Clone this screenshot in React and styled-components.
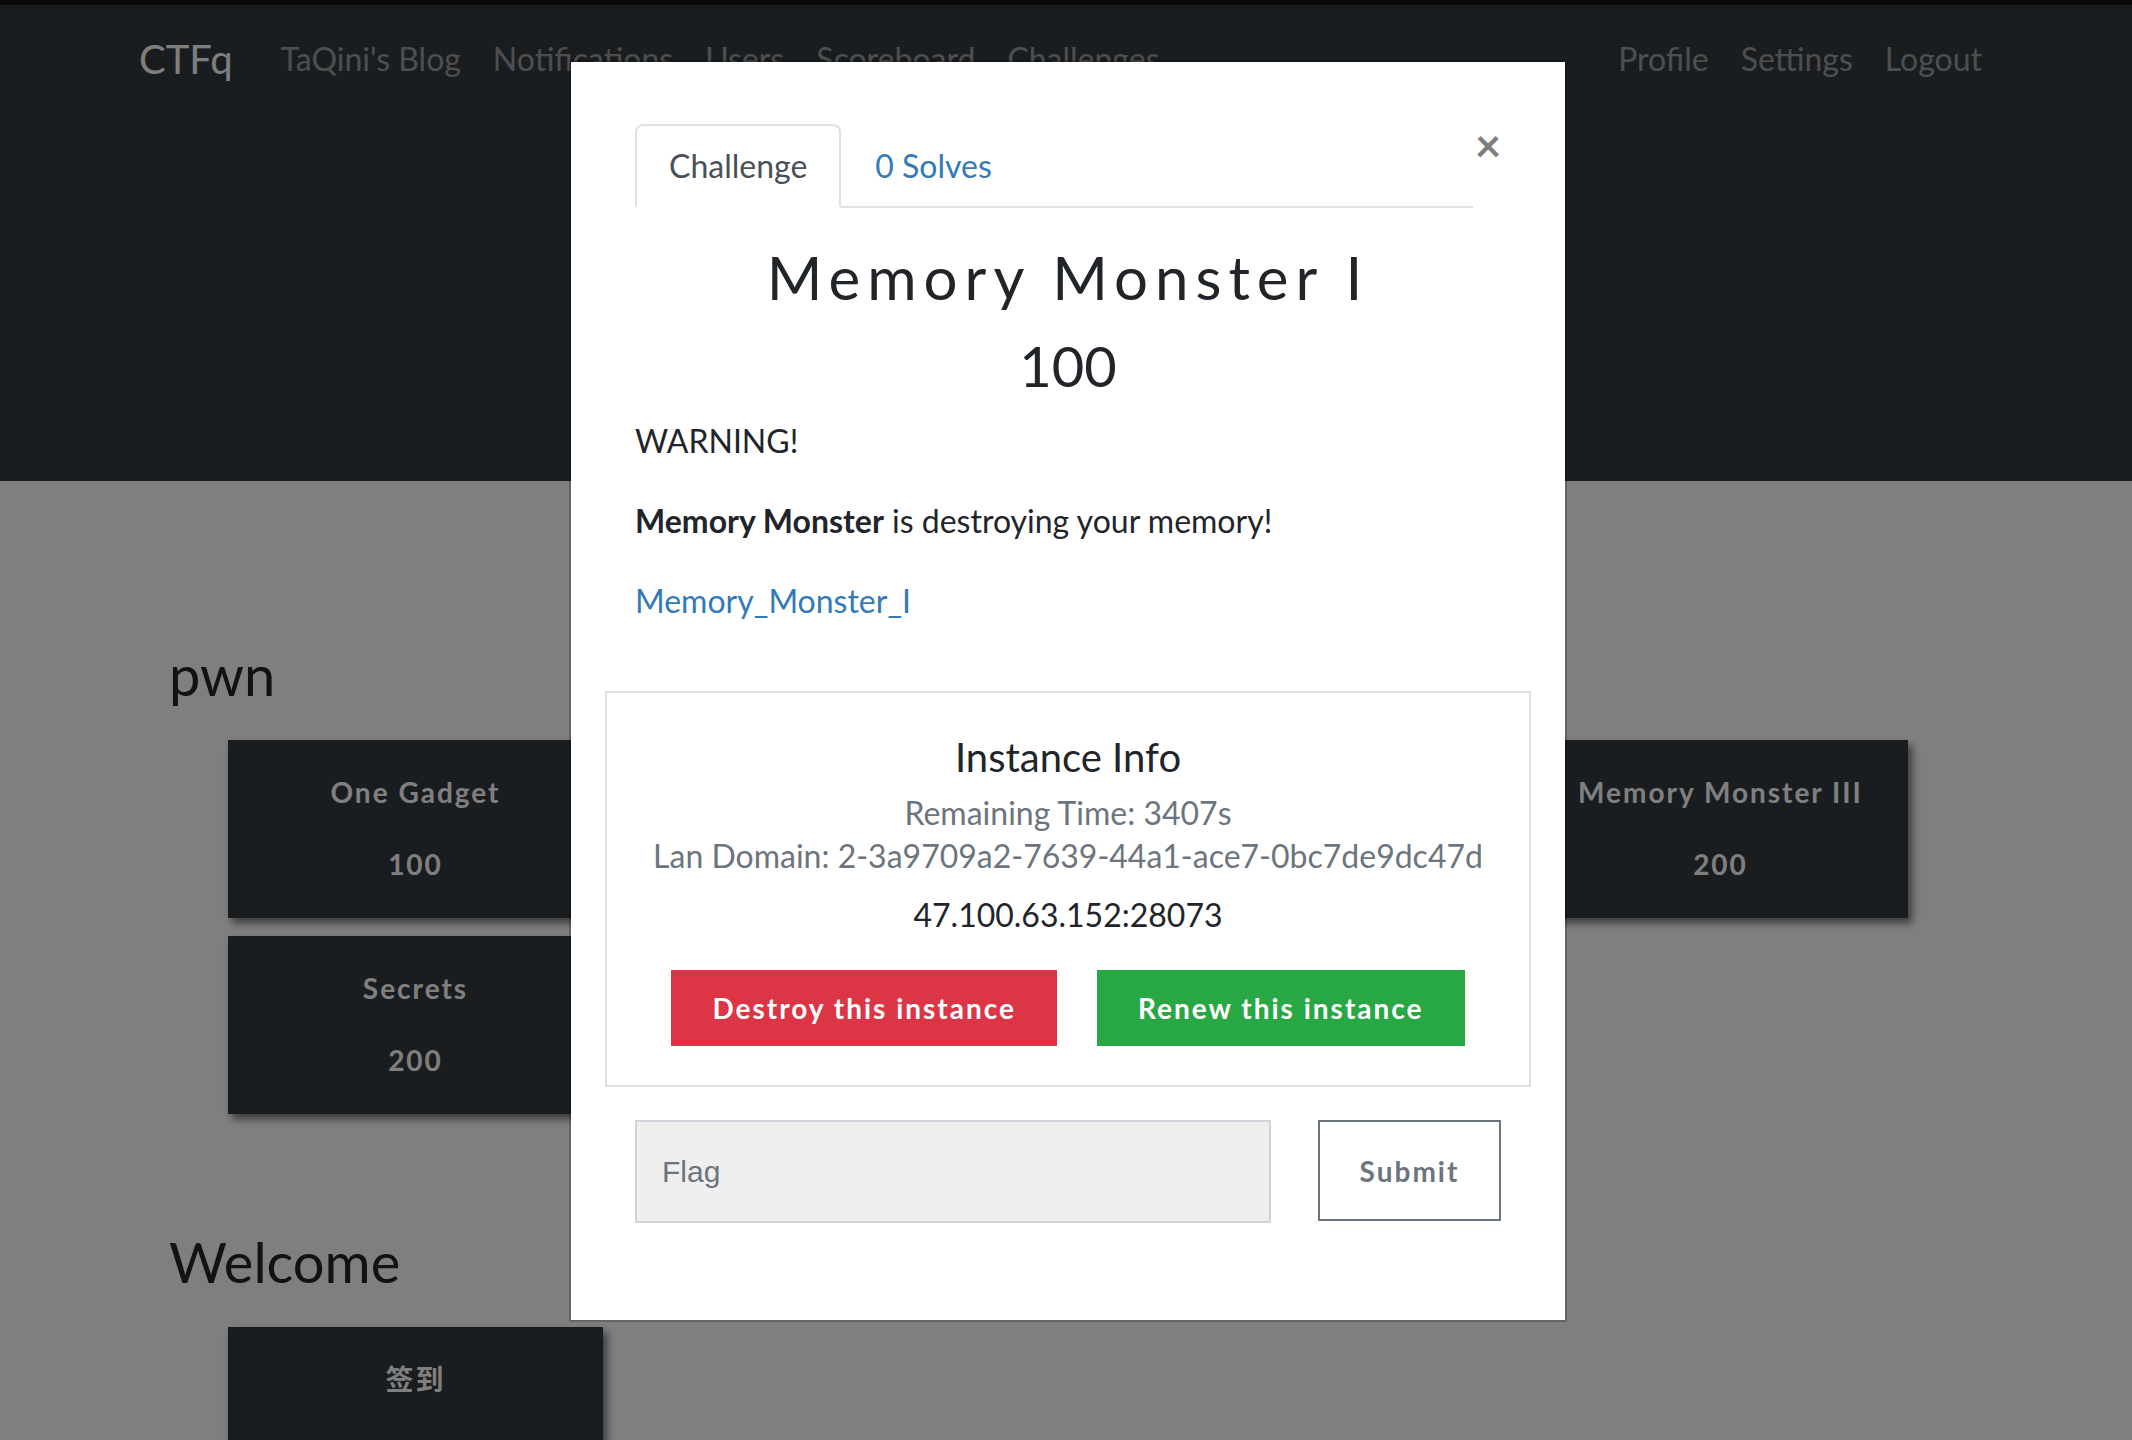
import React from "react";
import styled, { createGlobalStyle } from "styled-components";

const GlobalStyle = createGlobalStyle`
  html, body {
    margin: 0;
    padding: 0;
    overflow: hidden;
    background: #fff;
  }
  body {
    font-family: Lato, "Noto Sans", "Noto Sans CJK SC", sans-serif;
    color: #212529;
  }
  * { box-sizing: border-box; }
`;

const Header = styled.header`
  background: #343a40;
  border-top: 5px solid #141414;
  height: 481px;
`;

const Navbar = styled.nav`
  display: flex;
  align-items: center;
  justify-content: space-between;
  height: 107px;
  padding: 0 134px 0 139px;
`;

const NavGroup = styled.div`
  display: flex;
  align-items: center;
`;

const Brand = styled.a`
  font-size: 40px;
  color: #fdfdfd;
  margin-right: 32px;
  text-decoration: none;
`;

const NavLink = styled.a`
  font-size: 32px;
  line-height: 48px;
  padding: 0 16px;
  color: rgba(255, 255, 255, 0.5);
  text-decoration: none;
`;

const Jumbo = styled.div`
  text-align: center;
  padding-top: 110px;
  h1 {
    margin: 0;
    font-size: 80px;
    font-weight: 400;
    color: #fff;
  }
`;

const Main = styled.main`
  padding: 0 0 0 169px;
`;

const CategoryTitle = styled.h3`
  font-size: 56px;
  font-weight: 400;
  line-height: 1.2;
  margin: ${(p) => (p.$first ? "160px" : "114px")} 0 32px;
  color: #212529;
`;

const CardGrid = styled.div`
  display: grid;
  grid-template-columns: repeat(4, 375px);
  column-gap: 60px;
  row-gap: 18px;
  margin-left: 59px;
`;

const Card = styled.button`
  height: 178px;
  border: none;
  background: #343a40;
  color: #fff;
  font-family: Lato, "Noto Sans CJK SC", sans-serif;
  font-size: 28px;
  font-weight: 700;
  letter-spacing: 2px;
  box-shadow: 4px 5px 8px rgba(0, 0, 0, 0.55);
  padding: 31px 10px 0;
  display: flex;
  flex-direction: column;
  align-items: center;
  justify-content: flex-start;
  span {
    line-height: 42px;
    white-space: nowrap;
  }
  span + span {
    margin-top: 30px;
  }
`;

const Backdrop = styled.div`
  position: fixed;
  inset: 0;
  background: rgba(0, 0, 0, 0.5);
`;

const ModalLayer = styled.div`
  position: fixed;
  inset: 0;
  display: flex;
  justify-content: center;
  align-items: flex-start;
  padding: 60px 0 0 4px;
`;

const Modal = styled.div`
  width: 998px;
  height: 1262px;
  background: #fff;
  background-clip: padding-box;
  border: 2px solid rgba(0, 0, 0, 0.2);
  padding: 62px 64px 0;
`;

const TabRow = styled.div`
  display: flex;
  align-items: flex-start;
`;

const Tabs = styled.ul`
  flex: 1;
  display: flex;
  margin: 0;
  padding: 0;
  list-style: none;
  border-bottom: 2px solid #dee2e6;
`;

const Tab = styled.li`
  padding: 16px 32px;
  font-size: 32px;
  line-height: 48px;
  margin-bottom: -2px;
  border: 2px solid ${(p) => (p.$active ? "#dee2e6" : "transparent")};
  border-bottom-color: ${(p) => (p.$active ? "#fff" : "transparent")};
  border-radius: 8px 8px 0 0;
  color: ${(p) => (p.$active ? "#495057" : "#337ab7")};
  background: ${(p) => (p.$active ? "#fff" : "transparent")};
`;

const Close = styled.button`
  width: 30px;
  padding: 0;
  margin: -1px -2px 0 0;
  border: none;
  background: none;
  font-family: Lato, sans-serif;
  font-size: 46px;
  line-height: 44px;
  font-weight: 700;
  color: #000;
  opacity: 0.5;
`;

const ChallengeName = styled.h2`
  text-align: center;
  font-size: 60px;
  font-weight: 400;
  line-height: 1.2;
  letter-spacing: 7px;
  margin: 33px 0 19px;
`;

const ChallengeValue = styled.h3`
  text-align: center;
  font-size: 56px;
  font-weight: 400;
  line-height: 1.2;
  margin: 0 0 18px;
`;

const Para = styled.p`
  font-size: 32px;
  line-height: 48px;
  margin: 0 0 32px;
  a {
    color: #337ab7;
    text-decoration: none;
  }
`;

const InstanceBox = styled.div`
  margin: 66px -30px 0;
  border: 2px solid #dfdfdf;
  padding: 40px 0 39px;
  text-align: center;
`;

const InstanceTitle = styled.h5`
  font-size: 40px;
  font-weight: 400;
  line-height: 48px;
  margin: 0 0 10px;
`;

const Muted = styled.div`
  font-size: 32px;
  line-height: 43px;
  color: #6c757d;
`;

const Address = styled.div`
  font-size: 32px;
  line-height: 48px;
  margin: 14px 0 31px;
`;

const ButtonRow = styled.div`
  display: flex;
  justify-content: center;
  gap: 40px;
`;

const ActionButton = styled.button`
  height: 76px;
  padding: 0 41px;
  border: none;
  border-radius: 0;
  background: ${(p) => (p.$variant === "danger" ? "#dc3545" : "#28a745")};
  color: #fff;
  font-family: Lato, sans-serif;
  font-size: 28px;
  font-weight: 700;
  letter-spacing: 2px;
`;

const SubmitRow = styled.div`
  display: flex;
  justify-content: space-between;
  margin-top: 33px;
`;

const FlagInput = styled.input`
  width: 636px;
  height: 103px;
  background: #efefef;
  border: 2px solid #ced4da;
  padding: 0 25px;
  font-family: "Liberation Sans", Arial, sans-serif;
  font-size: 30px;
  color: #495057;
  &::placeholder {
    color: #6c757d;
  }
`;

const SubmitButton = styled.button`
  width: 183px;
  height: 101px;
  background: #fff;
  border: 2px solid #6c757d;
  color: #6c757d;
  font-family: Lato, sans-serif;
  font-size: 28px;
  font-weight: 700;
  letter-spacing: 2px;
`;

const categories = [
  {
    name: "pwn",
    items: [
      ["One Gadget", 100],
      ["Memory Monster I", 100],
      ["Memory Monster II", 200],
      ["Memory Monster III", 200],
      ["Secrets", 200],
    ],
  },
  { name: "Welcome", items: [["签到", 50]] },
];

export default function App() {
  return (
    <>
      <GlobalStyle />
      <Header>
        <Navbar>
          <NavGroup>
            <Brand>CTFq</Brand>
            <NavLink>TaQini's Blog</NavLink>
            <NavLink>Notifications</NavLink>
            <NavLink>Users</NavLink>
            <NavLink>Scoreboard</NavLink>
            <NavLink>Challenges</NavLink>
          </NavGroup>
          <NavGroup>
            <NavLink>Profile</NavLink>
            <NavLink>Settings</NavLink>
            <NavLink>Logout</NavLink>
          </NavGroup>
        </Navbar>
        <Jumbo>
          <h1>Challenges</h1>
        </Jumbo>
      </Header>
      <Main>
        {categories.map((cat, i) => (
          <section key={cat.name}>
            <CategoryTitle $first={i === 0}>{cat.name}</CategoryTitle>
            <CardGrid>
              {cat.items.map(([name, value]) => (
                <Card key={name}>
                  <span>{name}</span>
                  <span>{value}</span>
                </Card>
              ))}
            </CardGrid>
          </section>
        ))}
      </Main>

      <Backdrop />
      <ModalLayer>
        <Modal>
          <TabRow>
            <Tabs>
              <Tab $active>Challenge</Tab>
              <Tab>0 Solves</Tab>
            </Tabs>
            <Close>×</Close>
          </TabRow>
          <ChallengeName>Memory Monster I</ChallengeName>
          <ChallengeValue>100</ChallengeValue>
          <Para>WARNING!</Para>
          <Para>
            <strong>Memory Monster</strong> is destroying your memory!
          </Para>
          <Para>
            <a href="#">Memory_Monster_I</a>
          </Para>
          <InstanceBox>
            <InstanceTitle>Instance Info</InstanceTitle>
            <Muted>Remaining Time: 3407s</Muted>
            <Muted>Lan Domain: 2-3a9709a2-7639-44a1-ace7-0bc7de9dc47d</Muted>
            <Address>47.100.63.152:28073</Address>
            <ButtonRow>
              <ActionButton $variant="danger">Destroy this instance</ActionButton>
              <ActionButton $variant="success">Renew this instance</ActionButton>
            </ButtonRow>
          </InstanceBox>
          <SubmitRow>
            <FlagInput placeholder="Flag" />
            <SubmitButton>Submit</SubmitButton>
          </SubmitRow>
        </Modal>
      </ModalLayer>
    </>
  );
}
